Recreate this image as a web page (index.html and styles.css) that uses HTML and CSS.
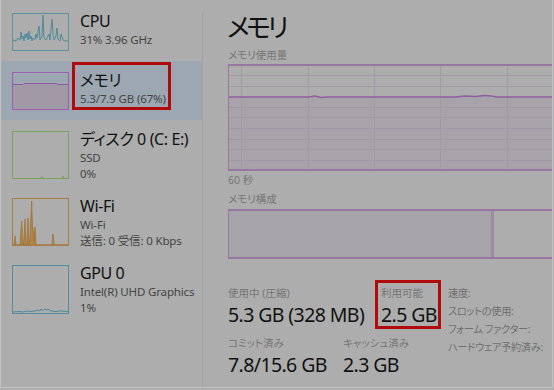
FILE: index.html
```html
<!DOCTYPE html>
<html lang="ja">
<head>
<meta charset="utf-8">
<title>タスク マネージャー - メモリ</title>
<link rel="stylesheet" href="styles.css">
</head>
<body>
<div class="frame">
  <aside class="sidebar">
    <div class="item item-short">
      <div class="thumb thumb-short thumb-cpu">
        <svg width="55" height="36" viewBox="0 0 55 36">
          <polyline fill="none" stroke="#4f8b9b" stroke-width="1" points="0,26 3,27 5,24 7,26 8,18 9,25 10,22 11,27 12,20 13,24 14,19 15,26 16,17 17,25 18,22 19,27 20,24 22,26 23,20 24,24 26,12 27,26 29,22 30,1 31,24 33,26 35,22 36,20 37,26 39,5 40,20 41,26 43,22 44,14 45,25 47,27 48,20 50,26 52,27 55,27"/>
        </svg>
      </div>
      <div class="info">
        <div class="name">CPU</div>
        <div class="sub">31% 3.96 GHz</div>
      </div>
    </div>
    <div class="item item-short selected">
      <div class="thumb thumb-short thumb-mem">
        <svg width="55" height="36" viewBox="0 0 55 36">
          <polygon fill="#a19aa6" points="0,11.5 10,11.5 11,10.5 43,10.5 45,11.5 55,11.5 55,36 0,36"/>
          <polyline fill="none" stroke="#9158a3" stroke-width="1" points="0,11.5 10,11.5 11,10.5 43,10.5 45,11.5 55,11.5"/>
        </svg>
      </div>
      <div class="info">
        <div class="name">メモリ</div>
        <div class="sub">5.3/7.9 GB (67%)</div>
        <div class="callout callout-side"></div>
      </div>
    </div>
    <div class="item item-tall">
      <div class="thumb thumb-tall thumb-disk">
        <svg width="55" height="46" viewBox="0 0 55 46">
          <polyline fill="none" stroke="#76a157" stroke-width="1" points="28,46 29,44.5 30,46"/>
          <polyline fill="none" stroke="#76a157" stroke-width="1" points="49,46 50,44 51,46"/>
        </svg>
      </div>
      <div class="info">
        <div class="name">ディスク 0 (C: E:)</div>
        <div class="sub">SSD</div>
        <div class="sub">0%</div>
      </div>
    </div>
    <div class="item item-tall">
      <div class="thumb thumb-tall thumb-wifi">
        <svg width="55" height="46" viewBox="0 0 55 46">
          <polygon fill="#b08546" stroke="#a0743a" stroke-width="0.8" points="0,46 1,46 2,37 3,46 7,46 8.7,22 10,46 11,40 12,20 13,46 14,44 15,19 16,46 17,38 18.7,2 19.5,30 20,29 21,42 22,28 23,46 39,46 40,35 41,46 55,46"/>
        </svg>
      </div>
      <div class="info">
        <div class="name">Wi-Fi</div>
        <div class="sub">Wi-Fi</div>
        <div class="sub">送信: 0 受信: 0 Kbps</div>
      </div>
    </div>
    <div class="item item-tall">
      <div class="thumb thumb-tall thumb-gpu">
        <svg width="55" height="47" viewBox="0 0 55 47">
          <polyline fill="none" stroke="#4f8a9c" stroke-width="1" points="0,46 6,45.5 10,46 14,45 18,45.5 22,45 25,44 27,45 28,43 30,44.5 32,43 34,44 36,43.5 38,45 42,45.5 47,45 55,45.5"/>
        </svg>
      </div>
      <div class="info">
        <div class="name">GPU 0</div>
        <div class="sub">Intel(R) UHD Graphics</div>
        <div class="sub">1%</div>
      </div>
    </div>
  </aside>

  <div class="divider"></div>

  <main class="content">
    <h1 class="title">メモリ</h1>
    <div class="label label-usage">メモリ使用量</div>
    <div class="graph">
      <svg width="330" height="103" viewBox="0 0 330 103">
        <polygon fill="#a8a3ab" points="0,31 80,31 86,30 92,31.5 98,31 226,31 236,30 246,30.5 256,29.5 262,30 268,31 330,31 330,103 0,103"/>
        <g stroke="#a299a7" stroke-width="1">
          <line x1="0" y1="9.5" x2="330" y2="9.5"/>
          <line x1="0" y1="20.5" x2="330" y2="20.5"/>
          <line x1="0" y1="41.5" x2="330" y2="41.5"/>
          <line x1="0" y1="51.5" x2="330" y2="51.5"/>
          <line x1="0" y1="62.5" x2="330" y2="62.5"/>
          <line x1="0" y1="73.5" x2="330" y2="73.5"/>
          <line x1="0" y1="83.5" x2="330" y2="83.5"/>
          <line x1="0" y1="94.5" x2="330" y2="94.5"/>
          <line x1="12.5" y1="0" x2="12.5" y2="103"/>
          <line x1="79.5" y1="0" x2="79.5" y2="103"/>
          <line x1="145.5" y1="0" x2="145.5" y2="103"/>
          <line x1="211.5" y1="0" x2="211.5" y2="103"/>
          <line x1="278.5" y1="0" x2="278.5" y2="103"/>
        </g>
        <polyline fill="none" stroke="#8d5f9f" stroke-width="1.5" points="0,31 80,31 86,30 92,31.5 98,31 226,31 236,30 246,30.5 256,29.5 262,30 268,31 330,31"/>
      </svg>
    </div>
    <div class="label label-axis">60 秒</div>
    <div class="label label-comp">メモリ構成</div>
    <div class="bar">
      <div class="bar-used"></div>
      <div class="bar-sep"></div>
      <div class="bar-free"></div>
    </div>

    <div class="stats">
      <div class="stats-main">
        <div class="row row-first">
          <div class="stat stat-inuse">
            <div class="label">使用中 (圧縮)</div>
            <div class="value">5.3 GB (328 MB)</div>
          </div>
          <div class="stat stat-avail">
            <div class="label">利用可能</div>
            <div class="value">2.5 GB</div>
            <div class="callout callout-avail"></div>
          </div>
        </div>
        <div class="row row-second">
          <div class="stat stat-commit">
            <div class="label">コミット済み</div>
            <div class="value">7.8/15.6 GB</div>
          </div>
          <div class="stat">
            <div class="label">キャッシュ済み</div>
            <div class="value">2.3 GB</div>
          </div>
        </div>
        <div class="row row-third">
          <div class="stat stat-paged">
            <div class="label">ページ プール</div>
          </div>
          <div class="stat">
            <div class="label">非ページ プール</div>
          </div>
        </div>
      </div>
      <ul class="specs">
        <li>速度:</li>
        <li>スロットの使用:</li>
        <li>フォーム ファクター:</li>
        <li>ハードウェア予約済み:</li>
      </ul>
    </div>
  </main>
</div>
</body>
</html>
```

FILE: styles.css
```css
* { box-sizing: border-box; }

html, body {
  margin: 0;
  padding: 0;
  background: #adadad;
}

body {
  width: 554px;
  height: 390px;
  overflow: hidden;
  font-family: "Segoe UI", "Noto Sans", "Noto Sans CJK JP", sans-serif;
  font-feature-settings: "palt";
  color: #141414;
}

.frame {
  display: flex;
  width: 553px;
  height: 388px;
  border-left: 1px solid #c2c2c2;
  border-right: 1px solid #c2c2c2;
  border-bottom: 1px solid #c2c2c2;
  overflow: hidden;
}

/* ---------- sidebar ---------- */
.sidebar {
  width: 201px;
  flex: none;
  padding-top: 2px;
}

.item {
  display: flex;
  align-items: flex-start;
  gap: 11px;
  padding: 9px 0 0 11px;
}

.item-short { height: 59px; }
.item-tall { height: 67px; }

.selected { background: #9da7b2; }

.thumb {
  width: 57px;
  margin-top: 2px;
  border: 1px solid;
  flex: none;
}
.thumb svg { display: block; }
.thumb-short { height: 38px; }
.thumb-tall { height: 48px; }
.thumb-gpu { height: 49px; }

.thumb-cpu { border-color: #5893a2; }
.thumb-mem { border-color: #9a60ad; }
.thumb-disk { border-color: #78a35a; }
.thumb-wifi { border-color: #a67d45; }
.thumb-gpu { border-color: #52909f; }

.info {
  position: relative;
}

.name {
  font-size: 16px;
  line-height: 20px;
  letter-spacing: -0.4px;
  color: #111;
  white-space: nowrap;
}

.sub {
  font-size: 11.5px;
  line-height: 16px;
  letter-spacing: -0.15px;
  color: #444;
  white-space: nowrap;
}

.name + .sub { margin-top: 1px; }

.callout {
  position: absolute;
  border: 3px solid #b10a0a;
}

.callout-side {
  left: -8px;
  top: -8px;
  width: 99px;
  height: 48px;
}

/* ---------- divider ---------- */
.divider {
  width: 1px;
  flex: none;
  margin-top: 13px;
  background: #a2a2a2;
}

/* ---------- main ---------- */
.content {
  flex: 1;
  min-width: 0;
  padding-left: 25px;
  overflow: hidden;
}

.title {
  margin: 10px 0 0 -1px;
  font-size: 26px;
  line-height: 34px;
  letter-spacing: -3.5px;
  font-weight: normal;
  color: #111;
}

.label {
  font-size: 10.5px;
  line-height: 14px;
  color: #757575;
  white-space: nowrap;
}

.label-usage { margin-top: 4px; }

.graph {
  margin-top: 2px;
  height: 107px;
  border-top: 2px solid #97779f;
  border-bottom: 2px solid #97779f;
  border-left: 1px solid #97779f;
  overflow: hidden;
}
.graph svg { display: block; }

.label-axis { margin-top: 2px; }
.label-comp { margin-top: 5px; }

.bar {
  display: flex;
  margin-top: 3px;
  height: 50px;
  border-top: 2px solid #97779f;
  border-bottom: 2px solid #97779f;
  border-left: 1px solid #97779f;
}

.bar-used {
  width: 262px;
  background: #a7a4a9;
}

.bar-sep {
  width: 3px;
  background: #9c8da4;
}

.bar-free { flex: 1; }

/* ---------- stats ---------- */
.stats {
  display: flex;
  margin-top: 27px;
}

.stats-main {
  width: 220px;
  flex: none;
}

.row { display: flex; }
.row-second { margin-top: 9px; }
.row-third { margin-top: 8px; }

.stat {
  position: relative;
}

.stat-inuse { width: 153px; }
.stat-commit { width: 115px; }
.stat-paged { width: 87px; }

.value {
  margin-top: 3px;
  font-size: 19.5px;
  line-height: 24px;
  letter-spacing: -0.6px;
  color: #111;
  white-space: nowrap;
}

.callout-avail {
  left: -6px;
  top: -6px;
  width: 66px;
  height: 49px;
}

.specs {
  list-style: none;
  margin: 0;
  padding: 0;
}

.specs li {
  font-size: 10.2px;
  line-height: 18px;
  letter-spacing: -0.3px;
  margin-top: -2px;
  color: #6f6f6f;
  white-space: nowrap;
}
.specs li + li { margin-top: 0; }
```
